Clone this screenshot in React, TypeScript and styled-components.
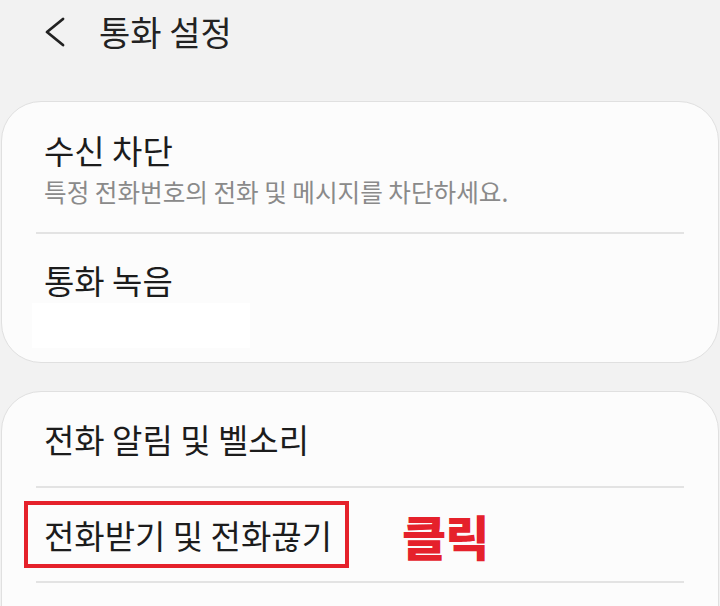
import React from 'react'
import styled, { createGlobalStyle } from 'styled-components'

const GlobalStyle = createGlobalStyle`
  html, body {
    margin: 0;
    padding: 0;
    overflow: hidden;
    background: #f2f2f2;
  }
  body {
    font-family: "Noto Sans CJK KR", "Noto Sans", sans-serif;
    color: #1c1c1c;
  }
`

const Screen = styled.div`
  width: 720px;
  height: 606px;
  background: #f2f2f2;
  overflow: hidden;
`

const Header = styled.div`
  height: 64px;
  display: flex;
  align-items: center;
  padding-left: 45px;
`

const BackButton = styled.div`
  width: 20px;
  height: 30px;
  display: flex;
  margin-right: 34px;
  color: #222;
`

const Title = styled.h1`
  margin: 0;
  font-size: 34px;
  font-weight: 400;
  line-height: 44px;
  letter-spacing: 0;
  color: #222;
`

const CardList = styled.div`
  display: flex;
  flex-direction: column;
  gap: 28px;
  padding-top: 37px;
`

const Card = styled.div`
  margin: 0 1px;
  background: #fcfcfc;
  border: 1px solid #e0e0e0;
  border-radius: 40px;
  overflow: hidden;
`

const Row = styled.div<{ $pad?: string }>`
  display: flex;
  flex-direction: column;
  padding: ${({ $pad }) => $pad || '0'};
  margin: 0 34px;
  & + & {
    border-top: 2px solid #e3e3e3;
  }
`

const RowTitle = styled.div`
  font-size: 33px;
  line-height: 40px;
  color: #1c1c1c;
  padding-left: 8px;
  white-space: nowrap;
`

const RowSub = styled.div`
  margin-top: 6px;
  font-size: 24.6px;
  line-height: 30px;
  color: #8a8a8a;
  padding-left: 8px;
  white-space: nowrap;
`

const Redacted = styled.div`
  width: 218px;
  height: 45px;
  margin: 3px 0 0 -4px;
  background: #ffffff;
`

const Highlight = styled.div`
  display: flex;
  align-items: center;
  gap: 53px;
`

const RedBox = styled.div`
  width: 325px;
  height: 67px;
  box-sizing: border-box;
  margin-left: -12px;
  border: 4px solid #e5212b;
  display: flex;
  align-items: center;
  padding-left: 16px;
  white-space: nowrap;
`

const BoxedTitle = styled(RowTitle)`
  padding-left: 0;
`

const ClickLabel = styled.span`
  font-size: 48px;
  font-weight: 900;
  line-height: 56px;
  color: #e5212b;
  letter-spacing: -1px;
`

const EmptyRow = styled(Row)`
  height: 96px;
  padding: 0;
`

export default function App() {
  return (
    <Screen>
      <GlobalStyle />
      <Header>
        <BackButton>
          <svg width="20" height="30" viewBox="0 0 20 30" fill="none">
            <polyline
              points="18,2 2,15 18,28"
              stroke="currentColor"
              strokeWidth="2.8"
              strokeLinecap="round"
              strokeLinejoin="round"
            />
          </svg>
        </BackButton>
        <Title>통화 설정</Title>
      </Header>
      <CardList>
        <Card>
          <Row $pad="28px 0 26px">
            <RowTitle>수신 차단</RowTitle>
            <RowSub>특정 전화번호의 전화 및 메시지를 차단하세요.</RowSub>
          </Row>
          <Row $pad="26px 0 14px">
            <RowTitle>통화 녹음</RowTitle>
            <Redacted />
          </Row>
        </Card>
        <Card>
          <Row $pad="27px 0 27px">
            <RowTitle>전화 알림 및 벨소리</RowTitle>
          </Row>
          <Row $pad="13px 0 13px">
            <Highlight>
              <RedBox>
                <BoxedTitle>전화받기 및 전화끊기</BoxedTitle>
              </RedBox>
              <ClickLabel>클릭</ClickLabel>
            </Highlight>
          </Row>
          <EmptyRow />
        </Card>
      </CardList>
    </Screen>
  )
}
